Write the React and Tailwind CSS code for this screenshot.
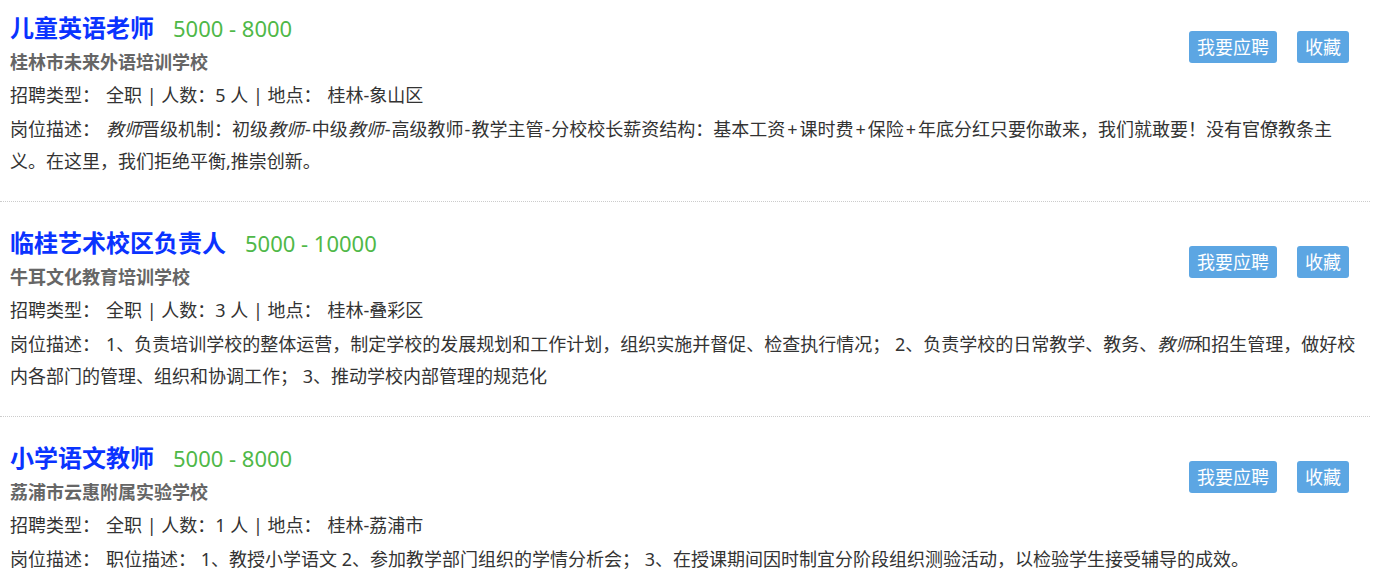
const jobs = [
  {
    title: '儿童英语老师',
    salary: '5000 - 8000',
    school: '桂林市未来外语培训学校',
    count: 5,
    place: '桂林-象山区',
    desc: (
      <>
        <em>教师</em>晋级机制：初级<em>教师</em><span className="px-[1px]">-</span>中级<em>教师</em>
        <span className="px-[1px]">-</span>高级教师<span className="px-[1px]">-</span>教学主管<span className="px-[1px]">-</span>
        分校校长薪资结构：基本工资<span className="px-[2px]">+</span>课时费<span className="px-[2px]">+</span>保险
        <span className="px-[2px]">+</span>年底分红只要你敢来，我们就敢要！没有官僚教条主义。在这里，我们拒绝平衡,推崇创新。
      </>
    ),
  },
  {
    title: '临桂艺术校区负责人',
    salary: '5000 - 10000',
    school: '牛耳文化教育培训学校',
    count: 3,
    place: '桂林-叠彩区',
    desc: (
      <>
        1、负责培训学校的整体运营，制定学校的发展规划和工作计划，组织实施并督促、检查执行情况； 2、负责学校的日常教学、教务、<em>教师</em>和招生管理，做好校内各部门的管理、组织和协调工作； 3、推动学校内部管理的规范化
      </>
    ),
  },
  {
    title: '小学语文教师',
    salary: '5000 - 8000',
    school: '荔浦市云惠附属实验学校',
    count: 1,
    place: '桂林-荔浦市',
    desc: <>职位描述： 1、教授小学语文 2、参加教学部门组织的学情分析会； 3、在授课期间因时制宜分阶段组织测验活动，以检验学生接受辅导的成效。</>,
  },
];

function JobItem({ job }) {
  return (
    <div className="border-b border-dotted border-[#cccccc] pl-[10px] pr-[13px] pt-[24px] pb-[24px] first:pt-[11px]">
      <div className="float-right mt-[20px] mr-[8px] flex gap-[20px]">
        <button className="h-[32px] rounded-[3px] bg-[#5ca6e3] px-[8px] text-[18px] leading-[32px] text-white">我要应聘</button>
        <button className="h-[32px] rounded-[3px] bg-[#5ca6e3] px-[8px] text-[18px] leading-[32px] text-white">收藏</button>
      </div>
      <div className="flex h-[34px] items-center">
        <span className="text-[24px] font-bold text-[#0a33ff]">{job.title}</span>
        <span className="ml-[19px] text-[22px] text-[#4fb848]">{job.salary}</span>
      </div>
      <div className="h-[34px] text-[18px] font-bold leading-[34px] text-[#666666]">{job.school}</div>
      <div className="h-[32px] text-[18px] leading-[32px] text-[#333333]">
        招聘类型：<span className="ml-[6px]">全职 | 人数：{job.count} 人 | 地点：</span>
        <span className="ml-[6px]">{job.place}</span>
      </div>
      <div className="mt-[2px] text-[18px] leading-[32px] text-[#333333]">
        岗位描述：<span className="ml-[6px]">{job.desc}</span>
      </div>
    </div>
  );
}

export default function App() {
  return (
    <div className="min-h-[587px] w-[1383px] bg-white font-['Noto_Sans','Noto_Sans_CJK_SC',sans-serif]">
      <div className="w-[1370px]">
        {jobs.map((job) => (
          <JobItem key={job.title} job={job} />
        ))}
      </div>
    </div>
  );
}
